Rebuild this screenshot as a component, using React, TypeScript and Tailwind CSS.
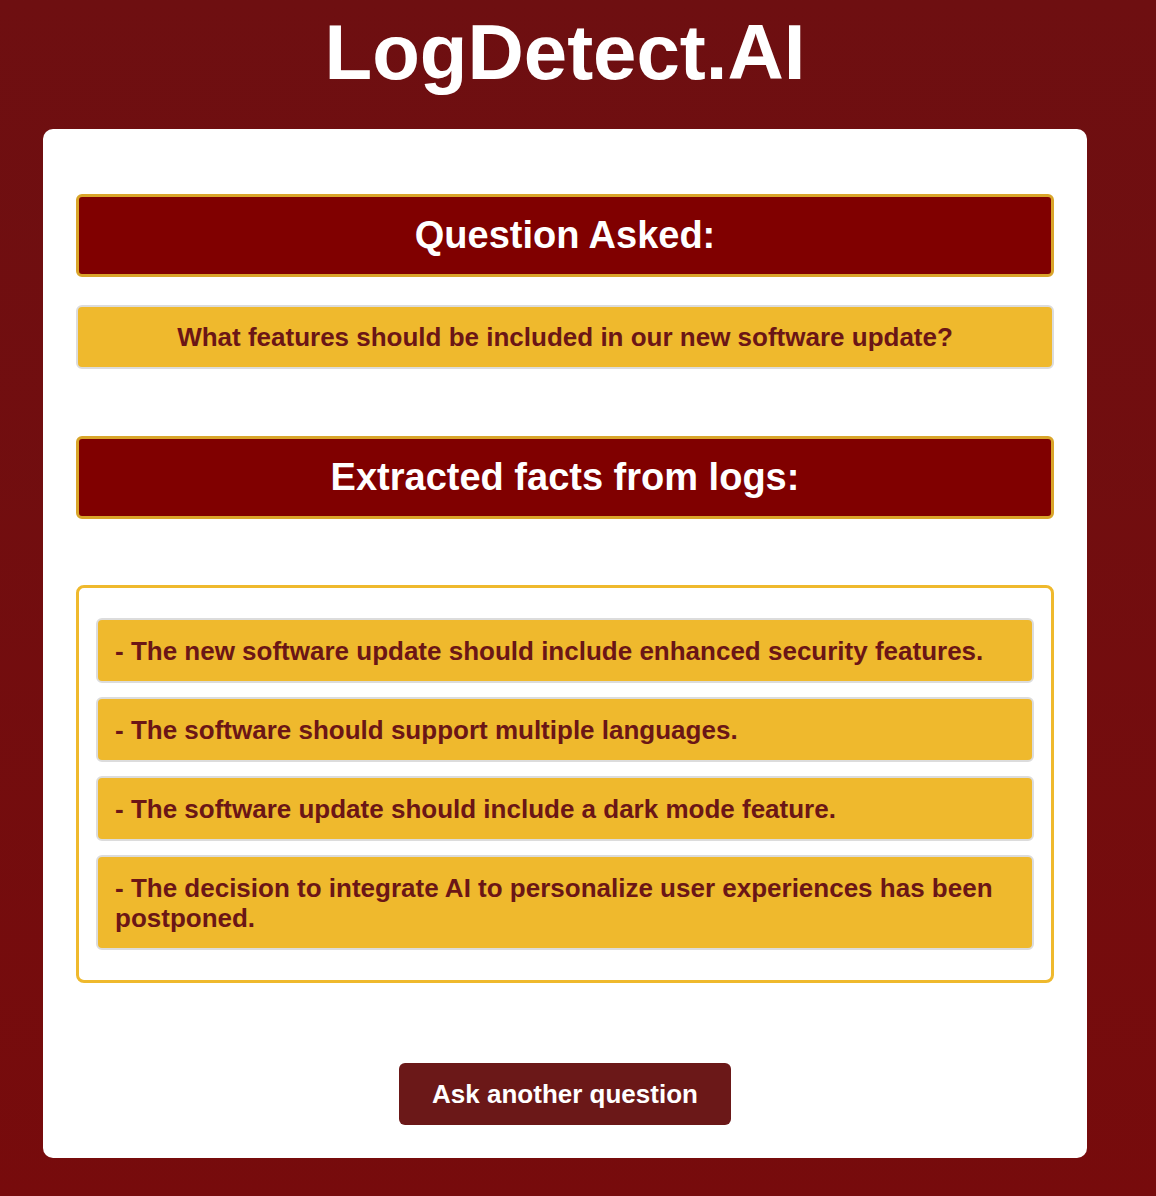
const facts = [
  '- The new software update should include enhanced security features.',
  '- The software should support multiple languages.',
  '- The software update should include a dark mode feature.',
  '- The decision to integrate AI to personalize user experiences has been postponed.',
];

function SectionHeader({ title }: { title: string }) {
  return (
    <div className="rounded-md border-[3px] border-[#d9a52a] bg-[#800000] py-[17px] text-center text-[38px] font-bold leading-[43px] text-white">
      {title}
    </div>
  );
}

export default function App() {
  return (
    <div className="min-h-[1196px] bg-gradient-to-b from-[#6e0f11] to-[#770b0c] font-['Liberation_Sans',Arial,sans-serif]">
      <div className="w-[1130px] pt-[7px] pb-[37px]">
        {/* Title */}
        <h1 className="text-center text-[78px] font-bold leading-[90px] text-white">LogDetect.AI</h1>

        {/* Result card */}
        <div className="ml-[43px] mt-[32px] w-[1044px] rounded-[10px] bg-white px-[33px] pt-[65px] pb-[33px]">
          <SectionHeader title="Question Asked:" />

          <div className="mt-[28px] rounded-md border-2 border-[#dcdcdc] bg-[#efb92d] py-[15px] text-center text-[26px] font-bold leading-[30px] text-[#6b1616]">
            What features should be included in our new software update?
          </div>

          <div className="mt-[67px]">
            <SectionHeader title="Extracted facts from logs:" />
          </div>

          {/* Facts list */}
          <div className="mt-[66px] flex flex-col gap-[14px] rounded-lg border-[3px] border-[#efb92d] px-[17px] py-[30px]">
            {facts.map((fact) => (
              <div
                key={fact}
                className="rounded-md border-2 border-[#dcdcdc] bg-[#efb92d] px-[17px] py-[15.5px] text-[26px] font-bold leading-[30px] text-[#6b1616]"
              >
                {fact}
              </div>
            ))}
          </div>

          <div className="mt-[80px] flex justify-center">
            <button className="rounded-md bg-[#6b1818] px-[33px] py-[16px] text-[26px] font-bold leading-[30px] text-white">
              Ask another question
            </button>
          </div>
        </div>
      </div>
    </div>
  );
}
